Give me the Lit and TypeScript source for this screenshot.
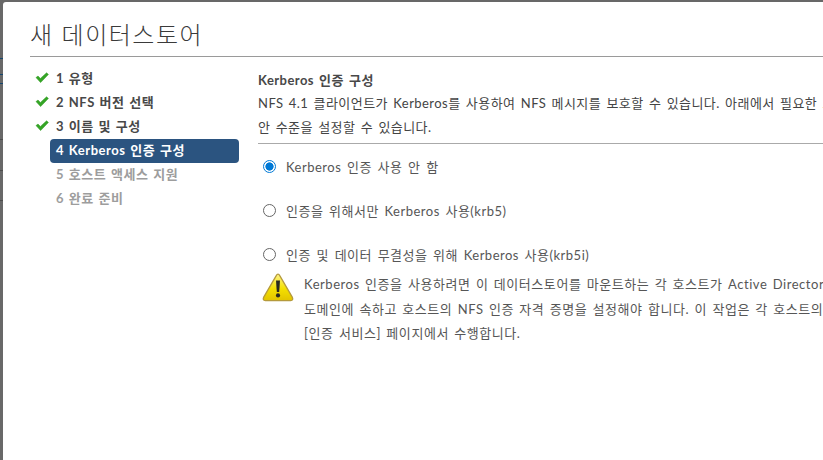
import { LitElement, html, css } from "lit";
import { customElement } from "lit/decorators.js";

const check = html`<svg class="check" width="14" height="12" viewBox="0 0 14 12"><path d="M1 5.6 L3 4 L5.4 6.4 L11.6 .8 L13.4 2.4 L5.6 10.6 Z" fill="#35a526" stroke="#2f9a20" stroke-width=".5" stroke-linejoin="round"/></svg>`;

const warn = html`<svg width="32" height="29" viewBox="0 0 32 29">
  <defs><linearGradient id="g" x1="0" y1="0" x2="0" y2="1"><stop offset="0" stop-color="#fff58a"/><stop offset=".55" stop-color="#f4e000"/><stop offset="1" stop-color="#e2c400"/></linearGradient></defs>
  <path d="M16 1.2 Q17 1.2 17.6 2.4 L30.4 24.4 Q31.6 27.4 28.6 27.6 L3.4 27.6 Q.4 27.4 1.6 24.4 L14.4 2.4 Q15 1.2 16 1.2 Z" fill="url(#g)" stroke="#b59a3c" stroke-width="1.3" stroke-linejoin="round"/>
  <path d="M14 7.5 L18 7.5 L17.2 19 L14.8 19 Z" fill="#2a2a20"/><circle cx="16" cy="22.4" r="2.1" fill="#2a2a20"/>
</svg>`;

@customElement("app-root")
export class AppRoot extends LitElement {
  static styles = css`
    :host {
      display: block; width: 823px; height: 460px; overflow: hidden; background-color: #686868;
      background-image:
        linear-gradient(#14466f, #14466f), linear-gradient(#14466f, #14466f), linear-gradient(#14466f, #14466f),
        linear-gradient(#4d4d4d, #4d4d4d), linear-gradient(#4d4d4d, #4d4d4d), linear-gradient(#4d4d4d, #4d4d4d);
      background-repeat: no-repeat;
      background-size: 3px 1px, 3px 1px, 3px 1px, 3px 1px, 3px 1px, 3px 1px;
      background-position: 0 58px, 0 74px, 0 83px, 0 139px, 0 170px, 0 200px;
      font-family: Lato, "Noto Sans CJK KR", sans-serif;
    }
    .dialog { box-sizing: border-box; width: 860px; height: 470px; margin: 2px 0 0 3px; background: #fff; border-radius: 3px 0 0 0; padding: 0 0 0 27px; }
    .title { height: 55px; box-sizing: border-box; padding-top: 16px; font-size: 24px; line-height: 34px; color: #3a3a3a; letter-spacing: 1.5px; border-bottom: 1px solid #9a9a9a; font-weight: 300; }
    .body { display: flex; }
    .nav { width: 209px; flex: none; padding-top: 9px; margin-right: 19px; }
    .step { display: flex; align-items: center; height: 24px; font-size: 13px; font-weight: 700; color: #484848; letter-spacing: .55px; word-spacing: 1px; }
    .icon { flex: none; display: flex; padding-left: 5px; box-sizing: border-box; width: 20px; }
    .label { flex: 1; height: 24px; line-height: 25px; padding-left: 6px; border-radius: 4px; white-space: nowrap; }
    .step.active { margin-top: 1px; margin-bottom: -1px; }
    .active .label { background: #2b5480; color: #fff; line-height: 23px; }
    .off { color: #9d9d9d; }
    .main { flex: 1; padding-top: 11px; }
    .h { font-size: 13px; font-weight: 700; line-height: 24px; color: #484848; height: 23px; letter-spacing: .45px; word-spacing: 1.5px; }
    .p { font-size: 13px; line-height: 24px; color: #444; white-space: nowrap; letter-spacing: .45px; word-spacing: 1.5px; }
    .rule { border-bottom: 1px solid #aaa; width: 600px; height: 29px; box-sizing: border-box; }
    .radios { padding-left: 5px; }
    .radio { display: flex; align-items: center; height: 44px; font-size: 13px; color: #565656; gap: 10px; white-space: nowrap; letter-spacing: .5px; word-spacing: 1.8px; }
    .dot { width: 13px; height: 13px; border-radius: 50%; box-sizing: border-box; border: 1px solid #666; flex: none; background: #fff; }
    .dot.on { border: 1px solid #0079d6; background: radial-gradient(circle, #0079d6 0 3.8px, #fff 4.4px); }
    .warn { display: flex; margin-top: -6px; padding-left: 4px; }
    .warn svg { flex: none; margin-right: 10px; margin-top: 3px; }
    .warn .p { line-height: 24.5px; color: #565656; padding-top: 2px; letter-spacing: .55px; word-spacing: 1.5px; }
  `;

  render() {
    const steps = ["1 유형", "2 NFS 버전 선택", "3 이름 및 구성"];
    return html`<div class="dialog">
      <div class="title">새 데이터스토어</div>
      <div class="body">
        <div class="nav">
          ${steps.map((s) => html`<div class="step"><span class="icon">${check}</span><span class="label">${s}</span></div>`)}
          <div class="step active"><span class="icon"></span><span class="label">4 Kerberos 인증 구성</span></div>
          <div class="step off"><span class="icon"></span><span class="label">5 호스트 액세스 지원</span></div>
          <div class="step off"><span class="icon"></span><span class="label">6 완료 준비</span></div>
        </div>
        <div class="main">
          <div class="h">Kerberos 인증 구성</div>
          <div class="p">NFS 4.1 클라이언트가 Kerberos를 사용하여 NFS 메시지를 보호할 수 있습니다. 아래에서 필요한 보</div>
          <div class="p rule">안 수준을 설정할 수 있습니다.</div>
          <div class="radios">
            <div class="radio"><span class="dot on"></span>Kerberos 인증 사용 안 함</div>
            <div class="radio"><span class="dot"></span>인증을 위해서만 Kerberos 사용(krb5)</div>
            <div class="radio"><span class="dot"></span>인증 및 데이터 무결성을 위해 Kerberos 사용(krb5i)</div>
          </div>
          <div class="warn">${warn}<div class="p">Kerberos 인증을 사용하려면 이 데이터스토어를 마운트하는 각 호스트가 Active Directory<br>도메인에 속하고 호스트의 NFS 인증 자격 증명을 설정해야 합니다. 이 작업은 각 호스트의<br>[인증 서비스] 페이지에서 수행합니다.</div></div>
        </div>
      </div>
    </div>`;
  }
}
